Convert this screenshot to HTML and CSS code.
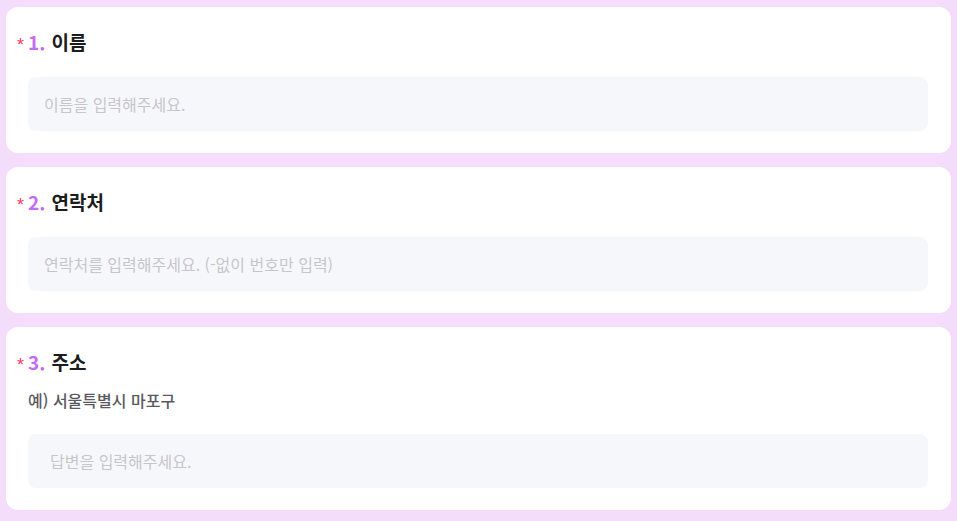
FILE: index.html
```html
<!DOCTYPE html>
<html lang="ko">
<head>
  <meta charset="UTF-8">
  <meta name="viewport" content="width=device-width, initial-scale=1.0">
  <title>신청서</title>
  <link rel="stylesheet" href="styles.css">
</head>
<body>
<div class="form">
  <div class="question">
    <h2 class="q-title"><span class="required">*</span><span class="q-num">1.</span> 이름</h2>
    <input type="text" class="answer" placeholder="이름을 입력해주세요.">
  </div>

  <div class="question">
    <h2 class="q-title"><span class="required">*</span><span class="q-num">2.</span> 연락처</h2>
    <input type="text" class="answer" placeholder="연락처를 입력해주세요. (-없이 번호만 입력)">
  </div>

  <div class="question">
    <h2 class="q-title"><span class="required">*</span><span class="q-num">3.</span> 주소</h2>
    <p class="q-desc">예) 서울특별시 마포구</p>
    <input type="text" class="answer answer-wide" placeholder="답변을 입력해주세요.">
  </div>
</div>
</body>
</html>
```

FILE: styles.css
```css
body {
  margin: 0;
  padding: 7px 6px;
  background-color: #f3ddfa;
  font-family: "Noto Sans CJK KR", "Noto Sans", sans-serif;
}
.form {
  display: flex;
  flex-direction: column;
  gap: 14px;
}
.question {
  background-color: white;
  border-radius: 12px;
  padding: 23px 23px 22px 22px;
}
.q-title {
  margin: 0 0 23px;
  font-size: 19px;
  line-height: 24px;
  font-weight: 700;
  color: #1c1c1e;
  display: flex;
  align-items: center;
}
.required {
  font-family: "Liberation Sans", sans-serif;
  color: #ff3d64;
  font-size: 18px;
  font-weight: 400;
  margin-left: -11px;
  margin-right: 4px;
  position: relative;
  top: 3px;
}
.q-num {
  color: #c66cf0;
  margin-right: 6px;
}
.q-desc {
  margin: -8px 0 23px;
  font-size: 16px;
  line-height: 22px;
  font-weight: 500;
  color: #5a5a5e;
}
.answer {
  display: block;
  width: 100%;
  height: 54px;
  box-sizing: border-box;
  padding: 0 16px;
  border: none;
  border-radius: 8px;
  background-color: #f6f7fb;
  font-family: inherit;
  font-size: 16px;
  color: #333;
  outline: none;
}
.answer::placeholder {
  color: #c6c6ca;
}
.answer-wide {
  padding: 0 22px;
}
```
